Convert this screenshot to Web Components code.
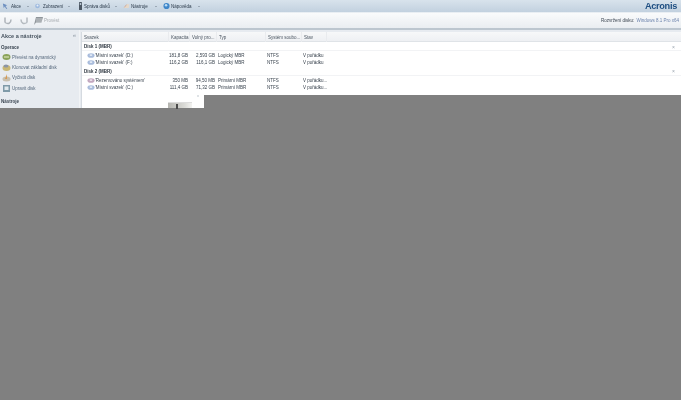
<!DOCTYPE html>
<html lang="cs"><head><meta charset="utf-8"><title>Acronis</title>
<style>
html,body{margin:0;height:400px;width:681px;overflow:hidden;background:#808080;font-family:"Liberation Sans",Arial,sans-serif}
</style></head><body>
<ac-app></ac-app>
<script>
function def(name, html){
  customElements.define(name, class extends HTMLElement{
    constructor(){super();this.attachShadow({mode:'open'}).innerHTML=html;}
  });
}
const ic={
 akce:'<svg width="7" height="8" viewBox="0 0 8 8"><path d="M1 1l5 2-2 1 2 3-1 .5-2-3-1 2z" fill="#6d8fc0"/></svg>',
 zob:'<svg width="5" height="8" viewBox="0 0 5 8"><circle cx="2.500" cy="4" r="2.300" fill="#9dbadf"/><circle cx="2.500" cy="3.400" r="1" fill="#e8eef6"/></svg>',
 disk:'<svg width="5" height="10" viewBox="0 0 5 10"><rect x="1" y="1" width="3" height="8" rx=".6" fill="#4c5763"/><rect x="1.800" y="2" width="1.400" height="2" fill="#b9c6d2"/></svg>',
 nas:'<svg width="7" height="10" viewBox="0 0 10 10"><path d="M1 8l5-6 3 1-1 5z" fill="#e6d8c8"/><path d="M2 7l3-4" stroke="#c99a88" stroke-width="1"/></svg>',
 nap:'<svg width="7" height="8" viewBox="0 0 10 10"><circle cx="5" cy="5" r="4.400" fill="#3f86c9"/><circle cx="4.400" cy="3.800" r="1.800" fill="#bcdcf4"/></svg>',
 undo:'<svg width="10" height="10" viewBox="0 0 10 10"><path d="M2 1.500v5M2 6.500c3 2 6 1 6-3" fill="none" stroke="#aeb4ba" stroke-width="1.500"/></svg>',
 redo:'<svg width="10" height="10" viewBox="0 0 10 10"><path d="M8 1.500v5M8 6.500C5 8.500 2 7.500 2 3.500" fill="none" stroke="#b5bbc0" stroke-width="1.500"/></svg>',
 flag:'<svg width="10" height="10" viewBox="0 0 10 10"><path d="M1 9L3 1h7L8.500 6.500H3" fill="#8f959a"/><path d="M4 2v4M6 2v4M8 2v4" stroke="#dfe2e5" stroke-width=".7"/></svg>',
 conv:'<svg width="9" height="8" viewBox="0 0 9 8"><ellipse cx="4.500" cy="4" rx="4" ry="3" fill="#8aa35a"/><path d="M2 4h5" stroke="#e9edc8"/></svg>',
 clone:'<svg width="9" height="9" viewBox="0 0 9 9"><ellipse cx="4.500" cy="5" rx="4" ry="3" fill="#c9b774"/><ellipse cx="4" cy="3" rx="2.500" ry="1.500" fill="#8b95a6"/></svg>',
 wipe:'<svg width="9" height="9" viewBox="0 0 9 9"><ellipse cx="4.500" cy="6" rx="4" ry="2.500" fill="#c7bfae"/><path d="M5 1L3 6h2z" fill="#d79a55"/></svg>',
 edit:'<svg width="9" height="9" viewBox="0 0 9 9"><rect x="1" y="1" width="7" height="7" fill="#7f9aa8"/><rect x="2.500" y="2.500" width="4" height="3.500" fill="#dfe8ec"/></svg>',
 vol:'<svg width="8" height="7" viewBox="0 0 9 7"><ellipse cx="4.500" cy="3.500" rx="4" ry="2.600" fill="#a9bcdc"/><ellipse cx="4.500" cy="3" rx="1.600" ry="1" fill="#e6edf7"/></svg>',
 sys:'<svg width="8" height="7" viewBox="0 0 9 7"><ellipse cx="4.500" cy="3.500" rx="4" ry="2.600" fill="#c2a8c0"/><ellipse cx="4.500" cy="3" rx="1.600" ry="1" fill="#eee6ef"/></svg>'
};

def('ac-menu-item',`<style>
:host{display:inline-flex;align-items:center;gap:var(--ig,2px);color:#2b3a4a;font-size:4.500px;height:12px;white-space:nowrap;width:var(--w);box-sizing:border-box}
.c{width:0;height:0;margin-left:auto;margin-right:var(--cr,6px);border:1.500px solid transparent;border-top:1.500px solid #6c7a88;border-bottom:0}
</style><slot name="i"></slot><slot></slot><span class="c"></span>`);

def('ac-menubar',`<style>
:host{display:flex;align-items:center;height:12px;padding-left:2px;background:linear-gradient(#d8e3ec,#c2d1df);position:relative;border-bottom:1px solid #e9eef3}
.logo{margin-left:auto;margin-right:4px;font:bold 9.200px "Liberation Sans",Arial,sans-serif;color:#1f4f82;letter-spacing:-.3px}
</style><slot></slot><span class="logo">Acronis</span>`);

def('ac-toolbar',`<style>
:host{display:flex;align-items:center;height:15px;padding:0 2px 0 3px;background:linear-gradient(#fafbfc,#e9edf1);font-size:4.500px;color:#a6abb0;border-bottom:2px solid #bcc6cf}
.r{margin-left:auto;color:#3a4450;white-space:nowrap}
.r b{font-weight:normal;color:#6d84ad;margin-left:1px}
</style><slot></slot><span class="r">Rozvržení disku: <b>Windows 8.1 Pro x64</b></span>`);

def('ac-side-action',`<style>
:host{display:flex;align-items:center;gap:1px;height:10.400px;padding-left:2px;font-size:4.500px;color:#56687c;white-space:nowrap}
::slotted(*){flex:none}
</style><slot name="i"></slot><slot></slot>`);

def('ac-side-head',`<style>
:host{display:block;font-size:4.500px;font-weight:bold;color:#3b4652;padding:0 0 0 1px;height:9px;line-height:9px}
</style><slot></slot>`);

def('ac-sidebar',`<style>
:host{display:block;width:80px;flex:none;background:#e7ebf0;box-sizing:border-box;padding:1px 0 0 0;position:relative;border-right:1px solid #f2f4f6}
h2{margin:0 0 2px 1px;font-size:5.500px;line-height:10px;font-weight:bold;color:#46525e}
.x{position:absolute;right:3px;top:1px;font-size:6px;line-height:8px;color:#8d98a3}
</style><h2>Akce a nástroje</h2><span class="x">«</span><slot></slot>`);

def('ac-col-head',`<style>
:host{display:flex;align-items:center;box-sizing:border-box;height:10px;padding-left:2px;font-size:4.500px;color:#4a5560;white-space:nowrap;overflow:hidden;border-right:1px solid #e9ebee}
</style><slot></slot>`);

def('ac-head-row',`<style>
:host{display:grid;grid-template-columns:87px 21px 27px 49px 36px 25px;height:10px;box-sizing:border-box;background:linear-gradient(#f7f8f9,#eef0f3);border-bottom:1px solid #dfe3e7}
</style><slot></slot>`);

def('ac-disk-head',`<style>
:host{display:flex;align-items:center;justify-content:space-between;height:8.600px;box-sizing:border-box;padding:0 6px 0 2px;margin-top:.8px;font-size:4.500px;font-weight:bold;color:#2e3741;border-bottom:1px solid #f2f3f5;background:#fff}
i{font-style:normal;font-weight:normal;color:#98a2ad;font-size:5px}
</style><span><slot></slot></span><i>×</i>`);

def('ac-row',`<style>
:host{display:grid;grid-template-columns:87px 21px 27px 49px 36px 25px;height:7.700px;align-items:center;font-size:4.500px;color:#38424d;white-space:nowrap}
.n{display:flex;align-items:center;padding-left:5px;overflow:hidden}
.rt{text-align:right;padding-right:2px}
.t{padding-left:1px}
.pl{padding-left:1px}
</style><span class="n"><slot name="i"></slot><slot name="n"></slot></span><span class="rt"><slot name="c"></slot></span><span class="rt"><slot name="f"></slot></span><span class="t"><slot name="t"></slot></span><span class="pl"><slot name="s"></slot></span><span class="pl"><slot name="st"></slot></span>`);

def('ac-table',`<style>
:host{display:block;flex:1;background:#fff;box-sizing:border-box;margin-left:1px;border-left:1px solid #d5dae0;min-width:0;margin-top:2px}
</style><slot></slot>`);

function row(kind,n,c,f,t,st){
 return `<ac-row><span slot="i" style="display:block;height:7px;flex:none">${ic[kind]}</span><span slot="n">${n}</span><span slot="c">${c}</span><span slot="f">${f}</span><span slot="t">${t}</span><span slot="s">NTFS</span><span slot="st">${st}</span></ac-row>`;
}
const ii=(k,w,h)=>`<span slot="i" style="display:block;width:${w}px;height:${h}px;flex:none">${ic[k]}</span>`;

def('ac-app',`<style>
:host{display:block;width:681px;height:400px;position:relative;background:#808080;filter:blur(.3px)}
.main{display:flex;height:78px;background:#e7ebf0}
.cover{position:absolute;left:204px;top:95px;right:0;height:13px;background:#808080}
.pop{position:absolute;left:168px;top:102px;width:24px;height:6px;background:linear-gradient(90deg,#b5b5b0,#dcdcd8 70%,#f3f3f1);border-top:1px solid #ddd;box-sizing:border-box}
.pop i{position:absolute;left:8px;top:1px;width:2px;height:5px;background:#4a4a4a}
.dot{position:absolute;left:197px;top:95px;width:2px;height:2px;background:#dfe3e6}
</style>
<ac-menubar>
<ac-menu-item style="--w:33px">${ii('akce',7,8)}Akce</ac-menu-item>
<ac-menu-item style="--w:43px;--cr:8px;--ig:3px">${ii('zob',5,8)}Zobrazení</ac-menu-item>
<ac-menu-item style="--w:45px;--ig:1px">${ii('disk',5,10)}Správa disků</ac-menu-item>
<ac-menu-item style="--w:40px;--ig:1px">${ii('nas',7,10)}Nástroje</ac-menu-item>
<ac-menu-item style="--w:37px;--cr:0;--ig:1px">${ii('nap',7,8)}Nápověda</ac-menu-item>
</ac-menubar>
<ac-toolbar><span style="display:flex;gap:6px;margin-right:4px">${ic.undo}${ic.redo}</span><span style="display:flex;align-items:center;gap:1px">${ic.flag}<span>Provést</span></span></ac-toolbar>
<div class="main">
<ac-sidebar>
<ac-side-head>Operace</ac-side-head>
<ac-side-action>${ii('conv',9,8)}Převést na dynamický</ac-side-action>
<ac-side-action>${ii('clone',9,9)}Klonovat základní disk</ac-side-action>
<ac-side-action>${ii('wipe',9,9)}Vyčistit disk</ac-side-action>
<ac-side-action>${ii('edit',9,9)}Upravit disk</ac-side-action>
<ac-side-head style="margin-top:3px">Nástroje</ac-side-head>
</ac-sidebar>
<ac-table>
<ac-head-row><ac-col-head>Svazek</ac-col-head><ac-col-head>Kapacita</ac-col-head><ac-col-head>Volný pro...</ac-col-head><ac-col-head>Typ</ac-col-head><ac-col-head>Systém soubo...</ac-col-head><ac-col-head>Stav</ac-col-head></ac-head-row>
<ac-disk-head>Disk 1 (MBR)</ac-disk-head>
${row('vol',"'Místní svazek' (D:)",'181,8 GB','2,593 GB','Logický MBR','V pořádku')}
${row('vol',"'Místní svazek' (F:)",'116,2 GB','116,1 GB','Logický MBR','V pořádku')}
<ac-disk-head>Disk 2 (MBR)</ac-disk-head>
${row('sys',"'Rezervováno systémem'",'350 MB','94,50 MB','Primární MBR','V pořádku...')}
${row('vol',"'Místní svazek' (C:)",'111,4 GB','71,32 GB','Primární MBR','V pořádku...')}
</ac-table>
</div>
<div class="cover"></div><div class="dot"></div><div class="pop"><i></i></div>
`);
</script>
</body></html>
